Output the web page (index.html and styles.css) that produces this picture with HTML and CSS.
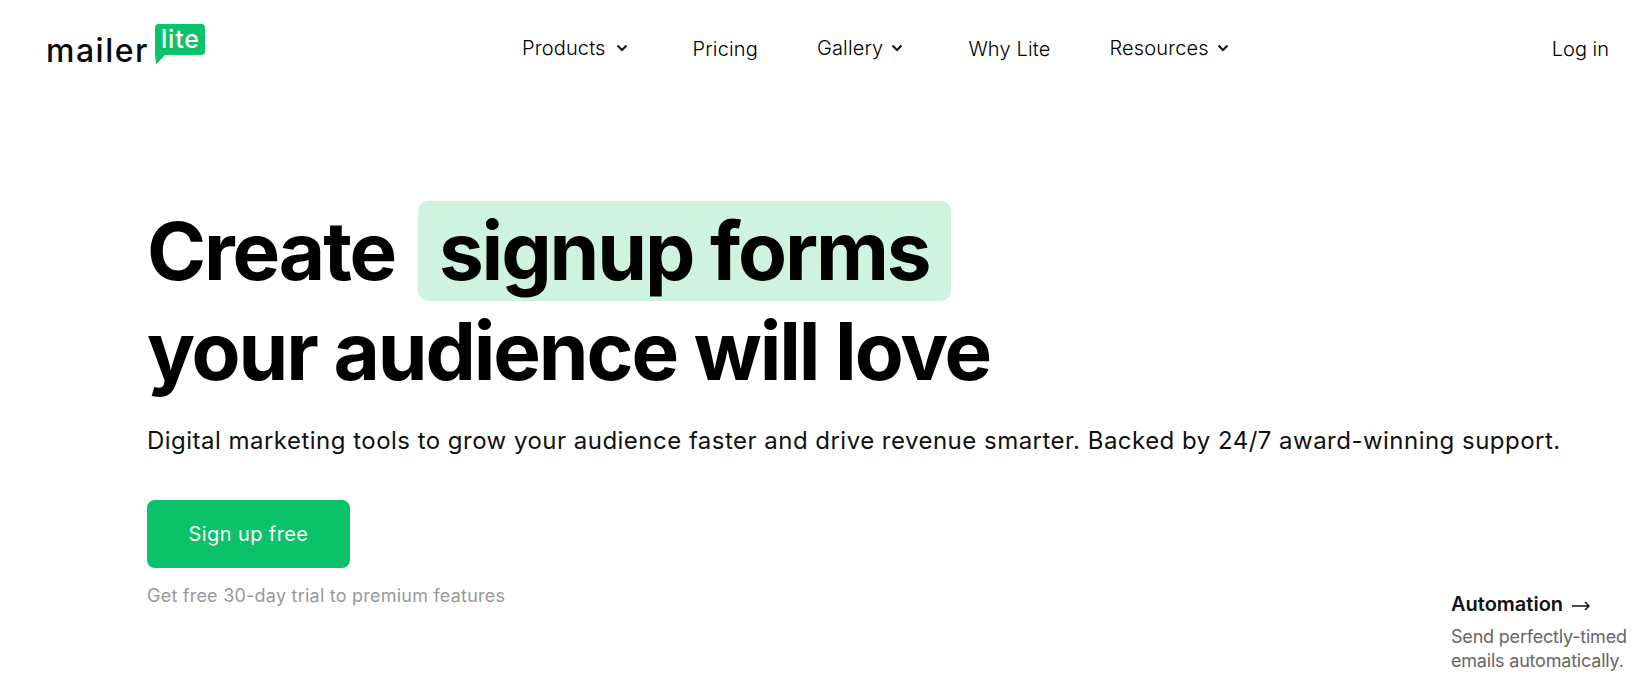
FILE: index.html
```html
<!DOCTYPE html>
<html lang="en">
<head>
<meta charset="utf-8">
<title>MailerLite</title>
<link rel="stylesheet" href="styles.css">
</head>
<body>
<header class="header">
  <a class="logo" href="#">
    <span class="logo-word">mailer</span>
    <span class="logo-bubble">
      <svg class="bubble-bg" width="50" height="41" viewBox="0 0 50 41"><path d="M4 0H46A4 4 0 0 1 50 4V27A4 4 0 0 1 46 31H10L1 40.500 0 30V4A4 4 0 0 1 4 0Z" fill="#09c269"/></svg>
      <span class="logo-lite">lite</span>
    </span>
  </a>
  <nav class="nav">
    <a class="nav-item has-menu" href="#">Products<svg class="chev" width="12" height="8" viewBox="0 0 12 8"><path d="M1.500 1.500L6 6L10.500 1.500" fill="none" stroke="#111" stroke-width="2"/></svg></a>
    <a class="nav-item nav-low" href="#">Pricing</a>
    <a class="nav-item has-menu" href="#">Gallery<svg class="chev" width="12" height="8" viewBox="0 0 12 8"><path d="M1.500 1.500L6 6L10.500 1.500" fill="none" stroke="#111" stroke-width="2"/></svg></a>
    <a class="nav-item nav-low" href="#">Why Lite</a>
    <a class="nav-item has-menu" href="#">Resources<svg class="chev" width="12" height="8" viewBox="0 0 12 8"><path d="M1.500 1.500L6 6L10.500 1.500" fill="none" stroke="#111" stroke-width="2"/></svg></a>
  </nav>
  <a class="login" href="#">Log in</a>
</header>
<main class="hero">
  <h1 class="title"><span class="title-line">Create <span class="mark">signup forms</span></span><span class="title-line">your audience will love</span></h1>
  <p class="lead">Digital marketing tools to grow your audience faster and drive revenue smarter. Backed by 24/7 award-winning support.</p>
  <a class="cta" href="#">Sign up free</a>
  <p class="note">Get free 30-day trial to premium features</p>
</main>
<aside class="feature">
  <div class="feature-title">Automation<svg class="arrow" width="18" height="10" viewBox="0 0 18 10"><path d="M0 5H17M13 1L17 5L13 9" fill="none" stroke="#111" stroke-width="1.500"/></svg></div>
  <div class="feature-text">Send perfectly-timed<br>emails automatically.</div>
</aside>
</body>
</html>
```
FILE: styles.css
```css
html, body { margin: 0; height: 687px; overflow: hidden; background: #fff; }
body { font-family: Inter, "Liberation Sans", sans-serif; color: #000; position: relative; }
a { color: inherit; text-decoration: none; }
.header { display: flex; align-items: flex-start; height: 100px; padding: 0 23px 0 46px; box-sizing: border-box; }
.logo { position: relative; display: flex; width: 160px; height: 70px; flex: none; }
.logo-word { font-weight: 500; font-size: 32px; line-height: 40px; margin-top: 31px; color: #0a0a0a; letter-spacing: 1.500px; }
.logo-bubble { position: absolute; left: 109px; top: 24px; width: 50px; height: 41px; }
.bubble-bg { display: block; }
.logo-lite { position: absolute; left: 6px; top: 0; font-weight: 500; font-size: 25px; line-height: 30px; letter-spacing: 0.8px; color: #fff; }
.nav { display: flex; margin-left: 316px; gap: 59px; padding-top: 36px; }
.nav-item { display: flex; align-items: center; height: 24px; font-size: 20px; line-height: 24px; font-weight: 300; letter-spacing: 0.15px; color: #000; white-space: nowrap; }
.has-menu { margin-right: 6px; }
.nav-low { margin-top: 1px; }
.chev { margin-left: 8px; }
.has-menu:first-child .chev { margin-left: 10px; }
.login { margin-left: auto; margin-top: 37px; font-size: 20px; line-height: 24px; font-weight: 300; color: #000; }
.hero { padding: 101px 0 0 147px; }
.title { margin: 0; font-size: 80px; line-height: 100px; font-weight: 750; letter-spacing: -2.130px; color: #000; }
.title-line { display: block; white-space: nowrap; }
.mark { display: inline-block; background: #cef3e1; border-radius: 10px; padding: 0 21px; margin-left: 6px; }
.lead { margin: 22px 0 0; font-size: 24px; line-height: 36px; letter-spacing: 0.48px; white-space: nowrap; color: #111; }
.cta { display: flex; align-items: center; justify-content: center; width: 203px; height: 68px; margin-top: 41px; background: #09c269; border-radius: 8px; color: #fff; font-size: 20px; font-weight: 400; letter-spacing: 0.4px; }
.note { margin: 16px 0 0; font-size: 18px; line-height: 24px; color: #999; letter-spacing: 0.23px; white-space: nowrap; }
.feature { position: absolute; left: 1451px; top: 592px; white-space: nowrap; }
.feature-title { font-size: 20px; line-height: 24px; font-weight: 600; color: #111; }
.arrow { margin-left: 9px; }
.feature-text { margin-top: 9px; font-size: 18px; line-height: 24px; letter-spacing: -0.2px; color: #666; }
```
